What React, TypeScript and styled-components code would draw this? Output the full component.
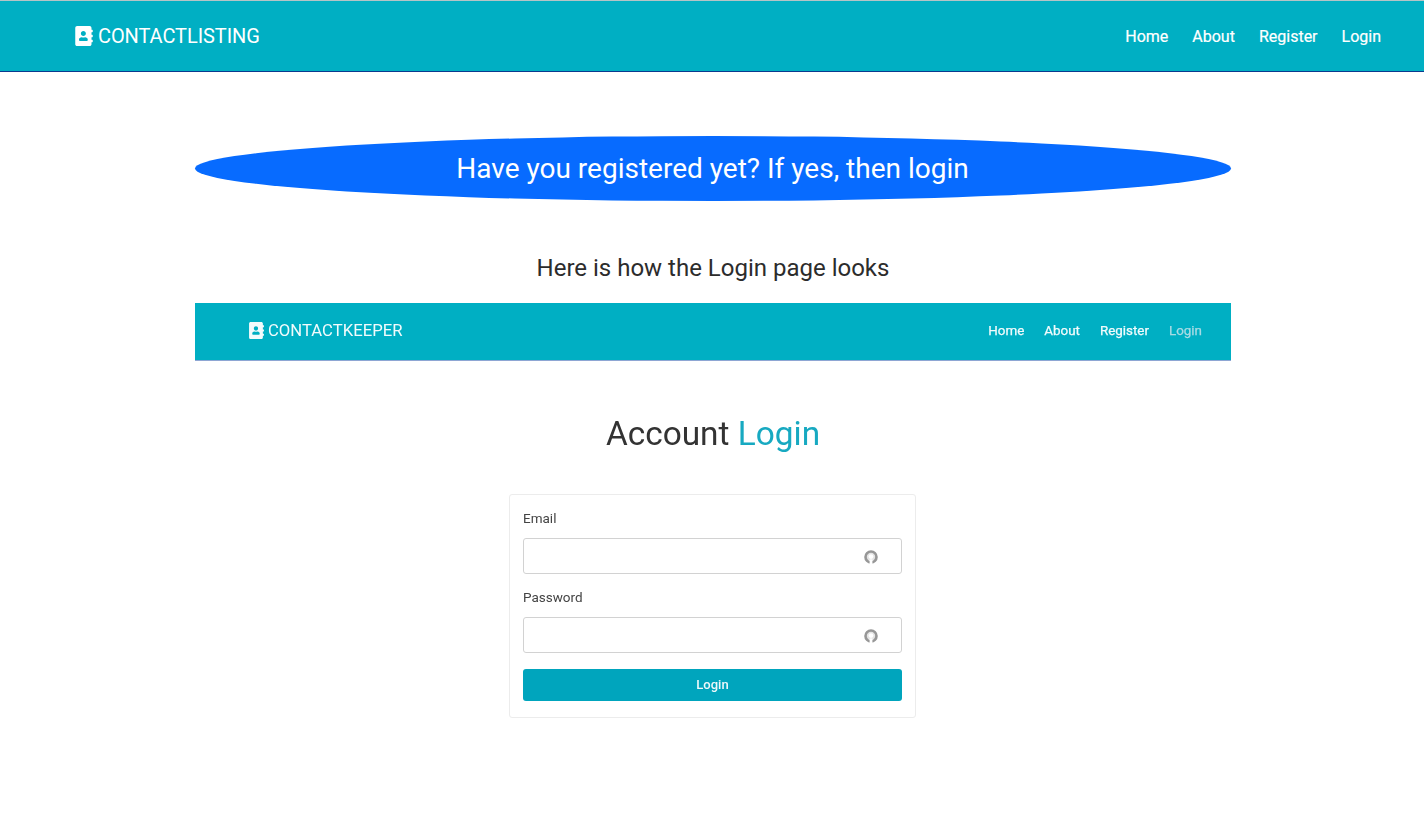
import React from 'react';
import styled, { createGlobalStyle } from 'styled-components';
import { FaAddressBook } from 'react-icons/fa';

const Global = createGlobalStyle`
  html, body { margin: 0; padding: 0; background: #fff; }
  body { font-family: Roboto, "Liberation Sans", sans-serif; color: #333; }
`;

const Page = styled.div`
  width: 1424px;
  height: 817px;
  overflow: hidden;
`;

const TopBar = styled.nav`
  box-sizing: border-box;
  height: 72px;
  display: flex;
  align-items: center;
  justify-content: space-between;
  padding: 0 43px 1px 74px;
  background: #00afc3;
  border-top: 1px solid #b5c4c6;
  border-bottom: 1px solid #0b3a8f;
  color: #fff;
`;

const Brand = styled.div`
  display: flex;
  align-items: center;
  gap: 4px;
  font-size: 20px;
  line-height: 24px;
  letter-spacing: -0.08px;
`;

const NavLinks = styled.div`
  display: flex;
  gap: 24px;
  padding-top: 2px;
  font-size: 16px;
  line-height: 20px;
  font-weight: 400;
  -webkit-text-stroke: 0.2px #fff;
`;

const Content = styled.main`
  width: 1036px;
  margin: 0 0 0 195px;
  padding-top: 64px;
  display: flex;
  flex-direction: column;
  align-items: stretch;
`;

const Pill = styled.div`
  height: 65px;
  display: flex;
  align-items: center;
  justify-content: center;
  padding-right: 1px;
  border-radius: 50%;
  background: #076bff;
  color: #fff;
  font-size: 28px;
`;

const Caption = styled.h2`
  margin: 50px 0 18px;
  text-align: center;
  font-size: 24px;
  line-height: 34px;
  font-weight: 400;
  color: #2c2c2c;
`;

const Shot = styled.section`
  display: flex;
  flex-direction: column;
  align-items: center;
`;

const ShotBar = styled.div`
  box-sizing: border-box;
  align-self: stretch;
  height: 58px;
  display: flex;
  align-items: center;
  justify-content: space-between;
  padding: 0 29px 2px 53px;
  background: #00afc3;
  border-bottom: 1px solid #8ea6d3;
  color: #f2fbfc;
`;

const ShotBrand = styled.div`
  display: flex;
  align-items: center;
  gap: 3px;
  font-size: 16.7px;
  filter: blur(0.35px);
`;

const ShotLinks = styled.div`
  display: flex;
  gap: 20px;
  padding-bottom: 1px;
  font-size: 13.4px;
  font-weight: 400;
  -webkit-text-stroke: 0.25px currentColor;
  filter: blur(0.35px);
`;

const ShotLink = styled.span<{ $muted?: boolean }>`
  color: ${p => (p.$muted ? '#a9dbe4' : '#f2fbfc')};
`;

const Title = styled.h1`
  margin: 52px 0 39px;
  font-size: 33.4px;
  line-height: 42px;
  font-weight: 400;
  color: #333;
  filter: blur(0.35px);
`;

const Accent = styled.span`
  color: #17a9c1;
`;

const Card = styled.div`
  box-sizing: border-box;
  width: 407px;
  height: 224px;
  margin-right: 1px;
  padding: 14px 13px 0;
  border: 1px solid #ececec;
  border-radius: 3px;
  display: flex;
  flex-direction: column;
`;

const Label = styled.label`
  font-size: 13.5px;
  line-height: 18px;
  color: #444;
  margin-bottom: 11px;
  filter: blur(0.3px);
`;

const Field = styled.div`
  box-sizing: border-box;
  height: 36px;
  margin-bottom: 14px;
  display: flex;
  align-items: center;
  justify-content: flex-end;
  padding: 2px 23px 0 0;
  border: 1px solid #d2d2d2;
  border-radius: 3px;
  filter: blur(0.25px);
`;

const LoginButton = styled.div`
  box-sizing: border-box;
  height: 32px;
  margin-top: 2px;
  padding-bottom: 2px;
  display: flex;
  align-items: center;
  justify-content: center;
  background: #00a5bd;
  border-radius: 3px;
  color: #eef8fa;
  font-size: 13px;
  font-weight: 500;
  filter: blur(0.25px);
`;

const KeyIcon = () => (
  <svg width="14" height="14" viewBox="0 0 14 14" aria-hidden="true">
    <circle cx="7" cy="7" r="5.5" fill="#e4e4e4" stroke="#979797" strokeWidth="2.6" />
    <rect x="5.6" y="9.4" width="2.8" height="4.6" fill="#fff" />
    <circle cx="7" cy="6.6" r="2.4" fill="#fff" />
  </svg>
);

export default function App() {
  return (
    <Page>
      <Global />
      <TopBar>
        <Brand>
          <FaAddressBook size={20} />
          CONTACTLISTING
        </Brand>
        <NavLinks>
          <span>Home</span>
          <span>About</span>
          <span>Register</span>
          <span>Login</span>
        </NavLinks>
      </TopBar>
      <Content>
        <Pill>Have you registered yet? If yes, then login</Pill>
        <Caption>Here is how the Login page looks</Caption>
        <Shot>
          <ShotBar>
            <ShotBrand>
              <FaAddressBook size={17} />
              CONTACTKEEPER
            </ShotBrand>
            <ShotLinks>
              <ShotLink>Home</ShotLink>
              <ShotLink>About</ShotLink>
              <ShotLink>Register</ShotLink>
              <ShotLink $muted>Login</ShotLink>
            </ShotLinks>
          </ShotBar>
          <Title>
            Account <Accent>Login</Accent>
          </Title>
          <Card>
            <Label>Email</Label>
            <Field><KeyIcon /></Field>
            <Label>Password</Label>
            <Field><KeyIcon /></Field>
            <LoginButton>Login</LoginButton>
          </Card>
        </Shot>
      </Content>
    </Page>
  );
}
